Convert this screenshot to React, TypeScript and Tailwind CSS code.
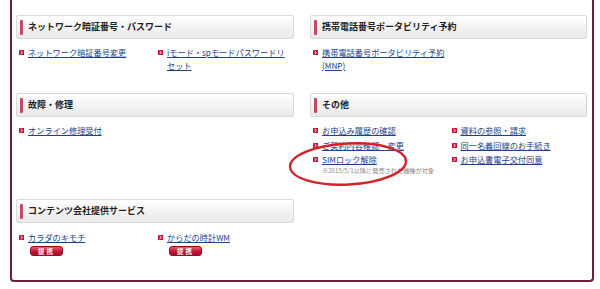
import type { ReactNode } from 'react';

type LinkItem = {
  label: ReactNode;
  note?: string;
  badge?: boolean;
};

const font = { fontFamily: '"Noto Sans CJK JP", "Liberation Sans", sans-serif' };

function Arrow() {
  return (
    <svg width="5" height="5" viewBox="0 0 5 5" className="shrink-0 mt-[4px]">
      <rect width="5" height="5" fill="#c2163c" />
      <path d="M1.6 1 L3.4 2.5 L1.6 4" stroke="#fff" strokeWidth="0.9" fill="none" />
    </svg>
  );
}

function Heading({ title }: { title: string }) {
  return (
    <div className="h-[24px] flex items-center border border-[#d9d9d9] rounded-[2px] bg-gradient-to-b from-[#ffffff] to-[#e9e9e9] pl-[3px]">
      <div className="w-[3px] h-[15px] bg-[#c04a66] rounded-[1px]" />
      <span className="ml-[5px] text-[9px] font-bold text-[#222]">{title}</span>
    </div>
  );
}

function Item({ item }: { item: LinkItem }) {
  return (
    <li className="flex gap-[4px] pl-[3px]">
      <Arrow />
      <div>
        <a className="text-[8.2px] leading-[13px] text-[#233f8c] underline underline-offset-[1px] block">
          {item.label}
        </a>
        {item.note && (
          <div className="text-[6.2px] leading-[10px] text-[#888]">{item.note}</div>
        )}
        {item.badge && (
          <div className="mt-[2px] ml-[2px] w-[33px] h-[10px] rounded-[3px] bg-gradient-to-b from-[#e9566c] via-[#c8163a] to-[#a80c2c] border border-[#8f0d28] flex items-center justify-center text-[6.5px] leading-none font-bold text-white tracking-[2px]">
            提携
          </div>
        )}
      </div>
    </li>
  );
}

function Section({
  title,
  cols,
  height,
  mt = 'mt-[7px]',
}: {
  title: string;
  cols: LinkItem[][];
  height: string;
  mt?: string;
}) {
  return (
    <section className={height}>
      <Heading title={title} />
      <div className={`grid grid-cols-2 ${mt}`}>
        {cols.map((col, i) => (
          <ul key={i} className="flex flex-col gap-[1.5px]">
            {col.map((item, j) => (
              <Item key={j} item={item} />
            ))}
          </ul>
        ))}
      </div>
    </section>
  );
}

export default function App() {
  return (
    <div className="w-[600px] h-[289px] bg-white pl-[10px]" style={font}>
      <div className="relative w-[584px] h-[282px] border-l-2 border-r-2 border-b-2 border-[#6b1f3c] rounded-b-[4px] px-[4px] pt-[15px]">
        <div className="grid grid-cols-[278px_277px] gap-x-[16px]">
          <div>
            <Section
              title="ネットワーク暗証番号・パスワード"
              height="h-[78px]"
              cols={[
                [{ label: 'ネットワーク暗証番号変更' }],
                [{ label: <>iモード・spモードパスワードリ<br />セット</> }],
              ]}
            />
            <Section
              title="故障・修理"
              height="h-[106px]"
              cols={[[{ label: 'オンライン修理受付' }], []]}
            />
            <Section
              title="コンテンツ会社提供サービス"
              height="h-[60px]"
              mt="mt-[8px]"
              cols={[
                [{ label: 'カラダのキモチ', badge: true }],
                [{ label: 'からだの時計WM', badge: true }],
              ]}
            />
          </div>
          <div>
            <section className="h-[78px]">
              <Heading title="携帯電話番号ポータビリティ予約" />
              <ul className="mt-[7px]">
                <Item item={{ label: <>携帯電話番号ポータビリティ予約<br />(MNP)</> }} />
              </ul>
            </section>
            <Section
              title="その他"
              height="h-[106px]"
              cols={[
                [
                  { label: 'お申込み履歴の確認' },
                  { label: 'ご契約内容確認・変更' },
                  { label: 'SIMロック解除', note: '※2015/5/1以降に発売された機種が対象' },
                ],
                [
                  { label: '資料の参照・請求' },
                  { label: '同一名義回線のお手続き' },
                  { label: 'お申込書電子交付同意' },
                ],
              ]}
            />
          </div>
        </div>

        {/* red hand-drawn circle over SIM unlock */}
        <svg
          className="absolute left-[274px] top-[138px] pointer-events-none"
          width="128"
          height="54"
          viewBox="0 0 128 54"
        >
          <ellipse
            cx="62"
            cy="26"
            rx="58"
            ry="20.5"
            transform="rotate(-3 62 26)"
            fill="none"
            stroke="#d3232a"
            strokeWidth="2.4"
          />
        </svg>
      </div>
    </div>
  );
}
